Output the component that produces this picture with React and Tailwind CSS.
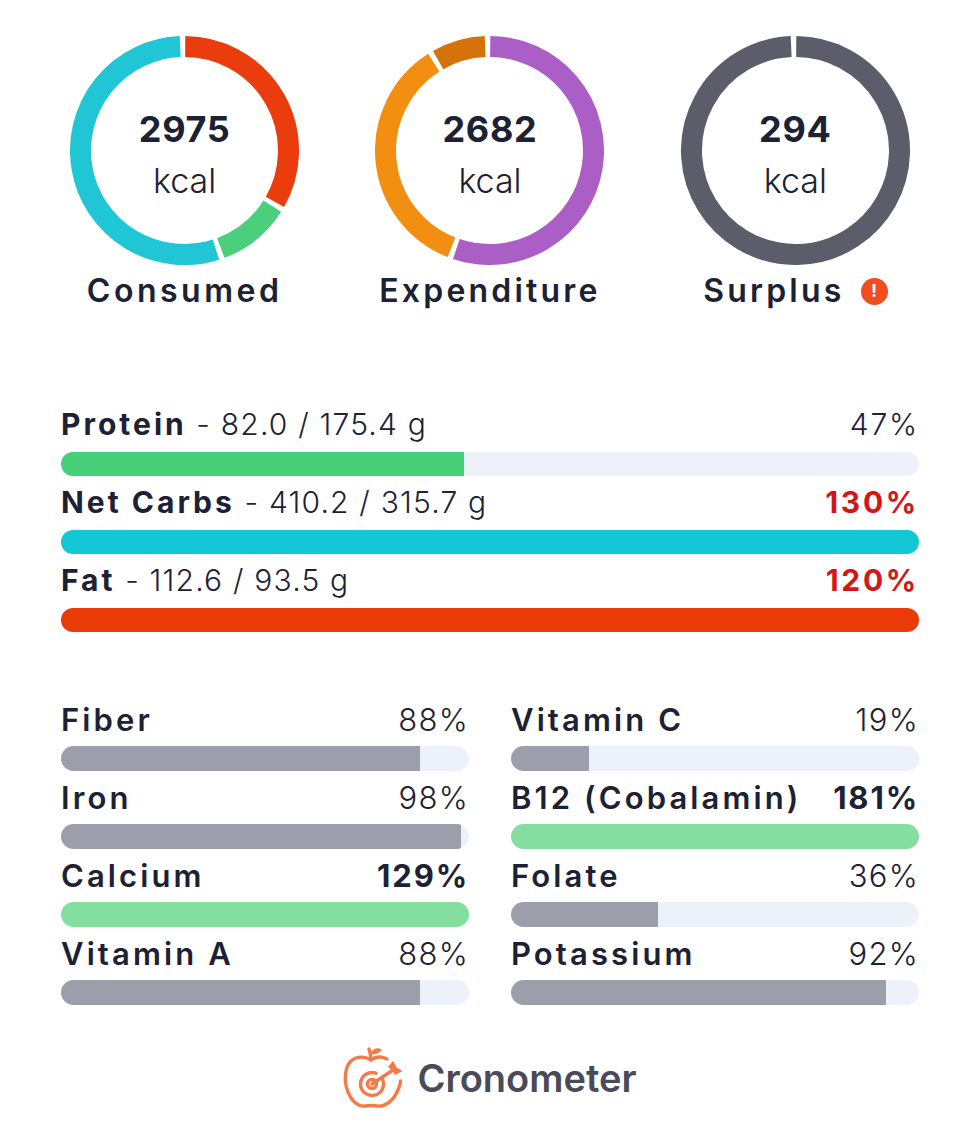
import React from "react";

const FONT = { fontFamily: "Inter, 'Noto Sans', sans-serif" };

function pt(cx, cy, r, deg) {
  const a = (deg * Math.PI) / 180;
  return [cx + r * Math.sin(a), cy - r * Math.cos(a)];
}

function arc(cx, cy, r, from, to) {
  const [x1, y1] = pt(cx, cy, r, from);
  const [x2, y2] = pt(cx, cy, r, to);
  const large = to - from > 180 ? 1 : 0;
  return `M ${x1} ${y1} A ${r} ${r} 0 ${large} 1 ${x2} ${y2}`;
}

function Ring({ segments, value }) {
  const size = 229;
  const c = size / 2;
  const r = 104;
  const gap = 1.4;
  return (
    <div className="relative w-[229px] h-[229px]">
      <svg width={size} height={size} viewBox={`0 0 ${size} ${size}`}>
        {segments.map((s, i) => (
          <path key={i} d={arc(c, c, r, s.from + gap, s.to - gap)} fill="none" stroke={s.color} strokeWidth="21" />
        ))}
      </svg>
      <div className="absolute inset-0 flex flex-col items-center pt-[73px] text-[#1d2134]">
        <span className="text-[36px] leading-[40px] font-bold tracking-[0.02em]">{value}</span>
        <span className="text-[34px] leading-[40px] font-light mt-[12px]">kcal</span>
      </div>
    </div>
  );
}

const macros = [
  { name: "Protein", detail: " - 82.0 / 175.4 g", pct: 47, color: "bg-[#47cf7a]", over: false },
  { name: "Net Carbs", detail: " - 410.2 / 315.7 g", pct: 130, color: "bg-[#13c7d4]", over: true },
  { name: "Fat", detail: " - 112.6 / 93.5 g", pct: 120, color: "bg-[#ea3a07]", over: true },
];

const left = [
  { name: "Fiber", pct: 88 },
  { name: "Iron", pct: 98 },
  { name: "Calcium", pct: 129 },
  { name: "Vitamin A", pct: 88 },
];
const right = [
  { name: "Vitamin C", pct: 19 },
  { name: "B12 (Cobalamin)", pct: 181 },
  { name: "Folate", pct: 36 },
  { name: "Potassium", pct: 92 },
];

function Bar({ pct, color, h = "h-[24px]" }) {
  return (
    <div className={`${h} w-full rounded-full bg-[#edf1f9] overflow-hidden`}>
      <div className={`h-full ${color}`} style={{ width: `${Math.min(pct, 100)}%` }} />
    </div>
  );
}

function MicroList({ items }) {
  return (
    <div className="flex flex-col">
      {items.map((m) => (
        <div key={m.name} className="flex flex-col pb-[9px]">
          <div className="flex items-center justify-between text-[31px] leading-[36px] text-[#1d2134]">
            <span className="font-semibold tracking-[0.1em]">{m.name}</span>
            <span className={m.pct > 100 ? "font-bold tracking-[0.06em]" : "font-light tracking-[0.04em]"}>{m.pct}%</span>
          </div>
          <div className="mt-[8px]">
            <Bar pct={m.pct} color={m.pct > 100 ? "bg-[#84dea0]" : "bg-[#9c9fab]"} h="h-[25px]" />
          </div>
        </div>
      ))}
    </div>
  );
}

function Logo() {
  return (
    <svg width="64" height="64" viewBox="0 0 64 64" fill="none" stroke="#f47a4a" strokeWidth="3.4" strokeLinecap="round" strokeLinejoin="round">
      <path d="M44 13 C38 10 32 11 28 14 C24 11 15 9 8 15 C1 22 1 36 5 46 C9 56 16 61 22 60 C25 59.5 31 59.5 34 60 C42 61 50 55 54 46 C56 42 57.5 39 57.5 35" />
      <path d="M28 14 C28 10 27 6 26 3" />
      <path d="M28 7 C31 3 35 2 38 4 C35 7 31 8 28 7 Z" fill="#f47a4a" strokeWidth="1.5" />
      <path d={arc(29, 38, 11.5, 60, 380)} />
      <circle cx="29" cy="38" r="4.5" />
      <path d="M29 38 L50 24" />
      <path d="M46 21 L50 16 L53 22 L50 24 Z" fill="#f47a4a" strokeWidth="1.5" />
      <path d="M50 24 L53 22 L58 25 L52 28 Z" fill="#f47a4a" strokeWidth="1.5" />
    </svg>
  );
}

export default function App() {
  return (
    <div className="w-[980px] min-h-[1142px] bg-white text-[#1d2134]" style={FONT}>
      <div className="grid grid-cols-3 px-[32px] pt-[36px]">
        <div className="flex flex-col items-center">
          <Ring
            value="2975"
            segments={[
              { from: -1, to: 121, color: "#ea3c0c" },
              { from: 121, to: 161, color: "#4bcf7c" },
              { from: 161, to: 359, color: "#20c6d5" },
            ]}
          />
          <span className="mt-[6px] text-[32px] leading-[40px] font-semibold tracking-[0.11em]">Consumed</span>
        </div>
        <div className="flex flex-col items-center">
          <Ring
            value="2682"
            segments={[
              { from: -1, to: 200, color: "#ab5ec5" },
              { from: 200, to: 329, color: "#f28f10" },
              { from: 329, to: 359, color: "#d5720c" },
            ]}
          />
          <span className="mt-[6px] text-[32px] leading-[40px] font-semibold tracking-[0.1em]">Expenditure</span>
        </div>
        <div className="flex flex-col items-center">
          <Ring value="294" segments={[{ from: -1, to: 359, color: "#5b5d6b" }]} />
          <div className="mt-[6px] flex items-center gap-[16px]">
            <span className="text-[32px] leading-[40px] font-semibold tracking-[0.1em]">Surplus</span>
            <span className="w-[27px] h-[27px] rounded-full bg-[#f04e1e] flex items-center justify-center text-white text-[18px] font-bold leading-none">!</span>
          </div>
        </div>
      </div>

      <div className="px-[61px] mt-[95px] flex flex-col">
        {macros.map((m) => (
          <div key={m.name} className="flex flex-col pb-[8px]">
            <div className="flex items-center justify-between text-[30px] leading-[36px]">
              <span>
                <span className="font-bold tracking-[0.1em]">{m.name}</span>
                <span className="font-light tracking-[0.04em]">{m.detail}</span>
              </span>
              <span className={m.over ? "font-bold text-[#d51616] tracking-[0.09em]" : "font-light tracking-[0.06em]"}>{m.pct}%</span>
            </div>
            <div className="mt-[10px]">
              <Bar pct={m.pct} color={m.color} />
            </div>
          </div>
        ))}
      </div>

      <div className="px-[61px] mt-[62px] grid grid-cols-2 gap-x-[42px]">
        <MicroList items={left} />
        <MicroList items={right} />
      </div>

      <div className="mt-[32px] flex items-center justify-center gap-[10px]">
        <Logo />
        <span className="text-[38px] leading-[48px] font-semibold text-[#4a4b59]">Cronometer</span>
      </div>
    </div>
  );
}
